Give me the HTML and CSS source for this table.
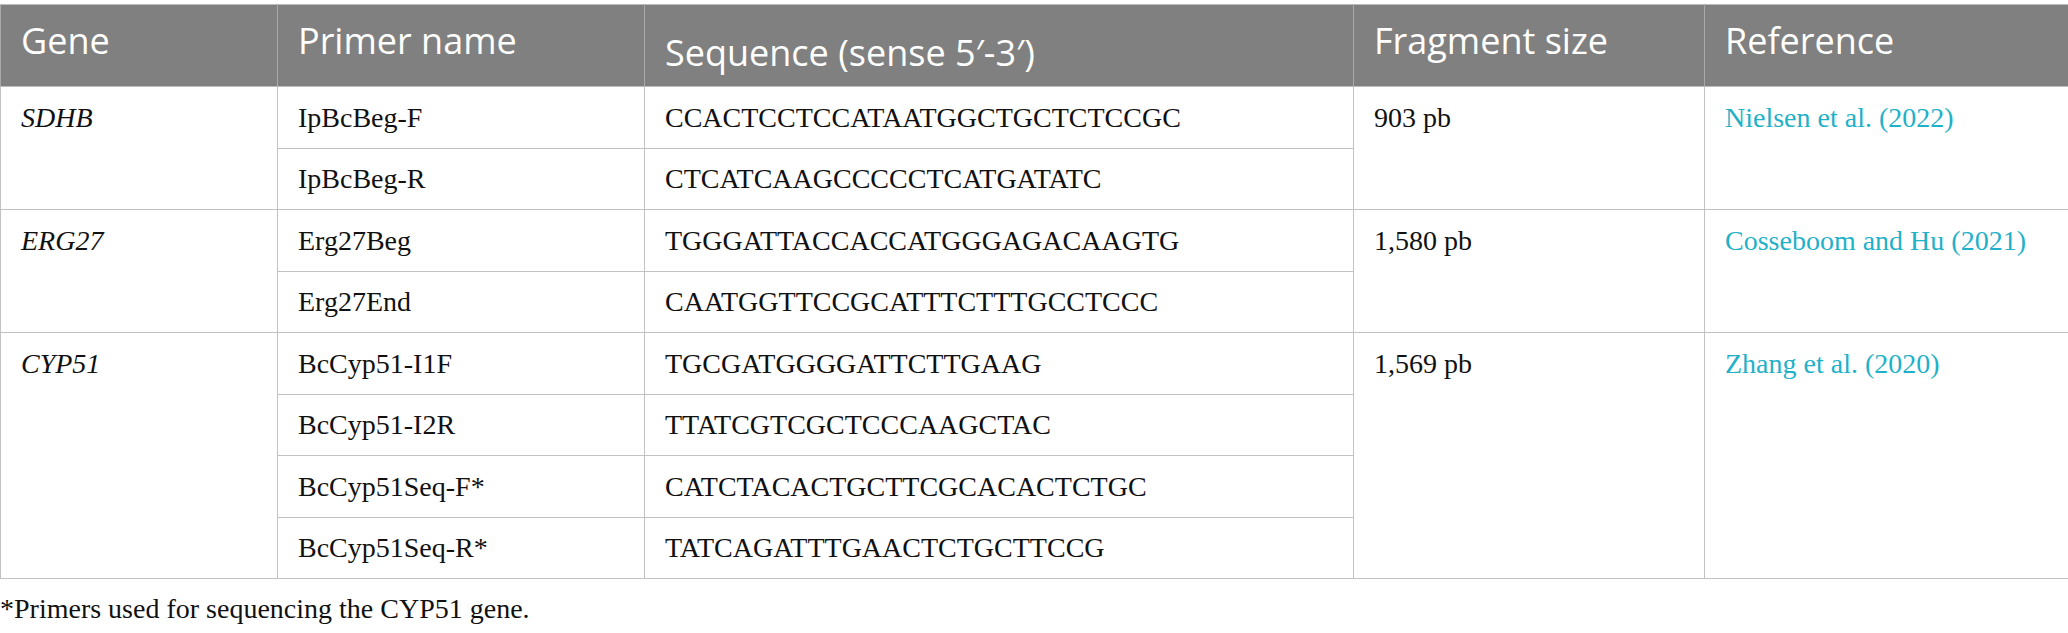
FILE: index.html
```html
<!DOCTYPE html>
<html lang="en">
<head>
<meta charset="utf-8">
<title>Primers</title>
<link rel="stylesheet" href="styles.css">
</head>
<body>
<table class="primers">
  <colgroup>
    <col class="c-gene">
    <col class="c-name">
    <col class="c-seq">
    <col class="c-size">
    <col class="c-ref">
  </colgroup>
  <thead>
    <tr>
      <th>Gene</th>
      <th>Primer name</th>
      <th class="th-seq">Sequence (sense 5′-3′)</th>
      <th>Fragment size</th>
      <th>Reference</th>
    </tr>
  </thead>
  <tbody>
    <tr>
      <td rowspan="2" class="gene">SDHB</td>
      <td>IpBcBeg-F</td>
      <td>CCACTCCTCCATAATGGCTGCTCTCCGC</td>
      <td rowspan="2">903 pb</td>
      <td rowspan="2"><a class="ref" href="#">Nielsen et al. (2022)</a></td>
    </tr>
    <tr>
      <td>IpBcBeg-R</td>
      <td>CTCATCAAGCCCCCTCATGATATC</td>
    </tr>
    <tr>
      <td rowspan="2" class="gene">ERG27</td>
      <td>Erg27Beg</td>
      <td>TGGGATTACCACCATGGGAGACAAGTG</td>
      <td rowspan="2">1,580 pb</td>
      <td rowspan="2"><a class="ref" href="#">Cosseboom and Hu (2021)</a></td>
    </tr>
    <tr>
      <td>Erg27End</td>
      <td>CAATGGTTCCGCATTTCTTTGCCTCCC</td>
    </tr>
    <tr>
      <td rowspan="4" class="gene">CYP51</td>
      <td>BcCyp51-I1F</td>
      <td>TGCGATGGGGATTCTTGAAG</td>
      <td rowspan="4">1,569 pb</td>
      <td rowspan="4"><a class="ref" href="#">Zhang et al. (2020)</a></td>
    </tr>
    <tr>
      <td>BcCyp51-I2R</td>
      <td>TTATCGTCGCTCCCAAGCTAC</td>
    </tr>
    <tr>
      <td>BcCyp51Seq-F*</td>
      <td>CATCTACACTGCTTCGCACACTCTGC</td>
    </tr>
    <tr>
      <td>BcCyp51Seq-R*</td>
      <td>TATCAGATTTGAACTCTGCTTCCG</td>
    </tr>
  </tbody>
</table>
<p class="footnote">*Primers used for sequencing the CYP51 gene.</p>
</body>
</html>
```

FILE: styles.css
```css
html, body {
  margin: 0;
  padding: 0;
  background: #ffffff;
}

body {
  font-family: "Liberation Serif", "Times New Roman", serif;
  color: #111111;
}

.primers {
  width: 2068px;
  margin-top: 4px;
  border-collapse: collapse;
  table-layout: fixed;
}

.c-gene { width: 277px; }
.c-name { width: 367px; }
.c-seq { width: 709px; }
.c-size { width: 351px; }
.c-ref { width: 364px; }

.primers th {
  background: #808080;
  color: #ffffff;
  font-family: "Open Sans", "Noto Sans", sans-serif;
  font-weight: 400;
  font-size: 36px;
  line-height: 48px;
  text-align: left;
  vertical-align: top;
  padding: 12px 20px 21px;
  border: 1px solid #a9a9a9;
  border-top-color: #bdbdbd;
  border-bottom-color: #bdbdbd;
}

.primers th.th-seq {
  padding-top: 24px;
  padding-bottom: 9px;
}

.primers td {
  font-size: 28px;
  line-height: 34px;
  text-align: left;
  vertical-align: top;
  padding: 13.5px 20px 13px;
  border: 1px solid #c2c2c2;
  white-space: nowrap;
}

.primers td.gene {
  font-style: italic;
}

.ref {
  color: #1fb1c8;
  text-decoration: none;
}

.footnote {
  margin: 13px 0 0;
  font-size: 28px;
  line-height: 34px;
}
```
